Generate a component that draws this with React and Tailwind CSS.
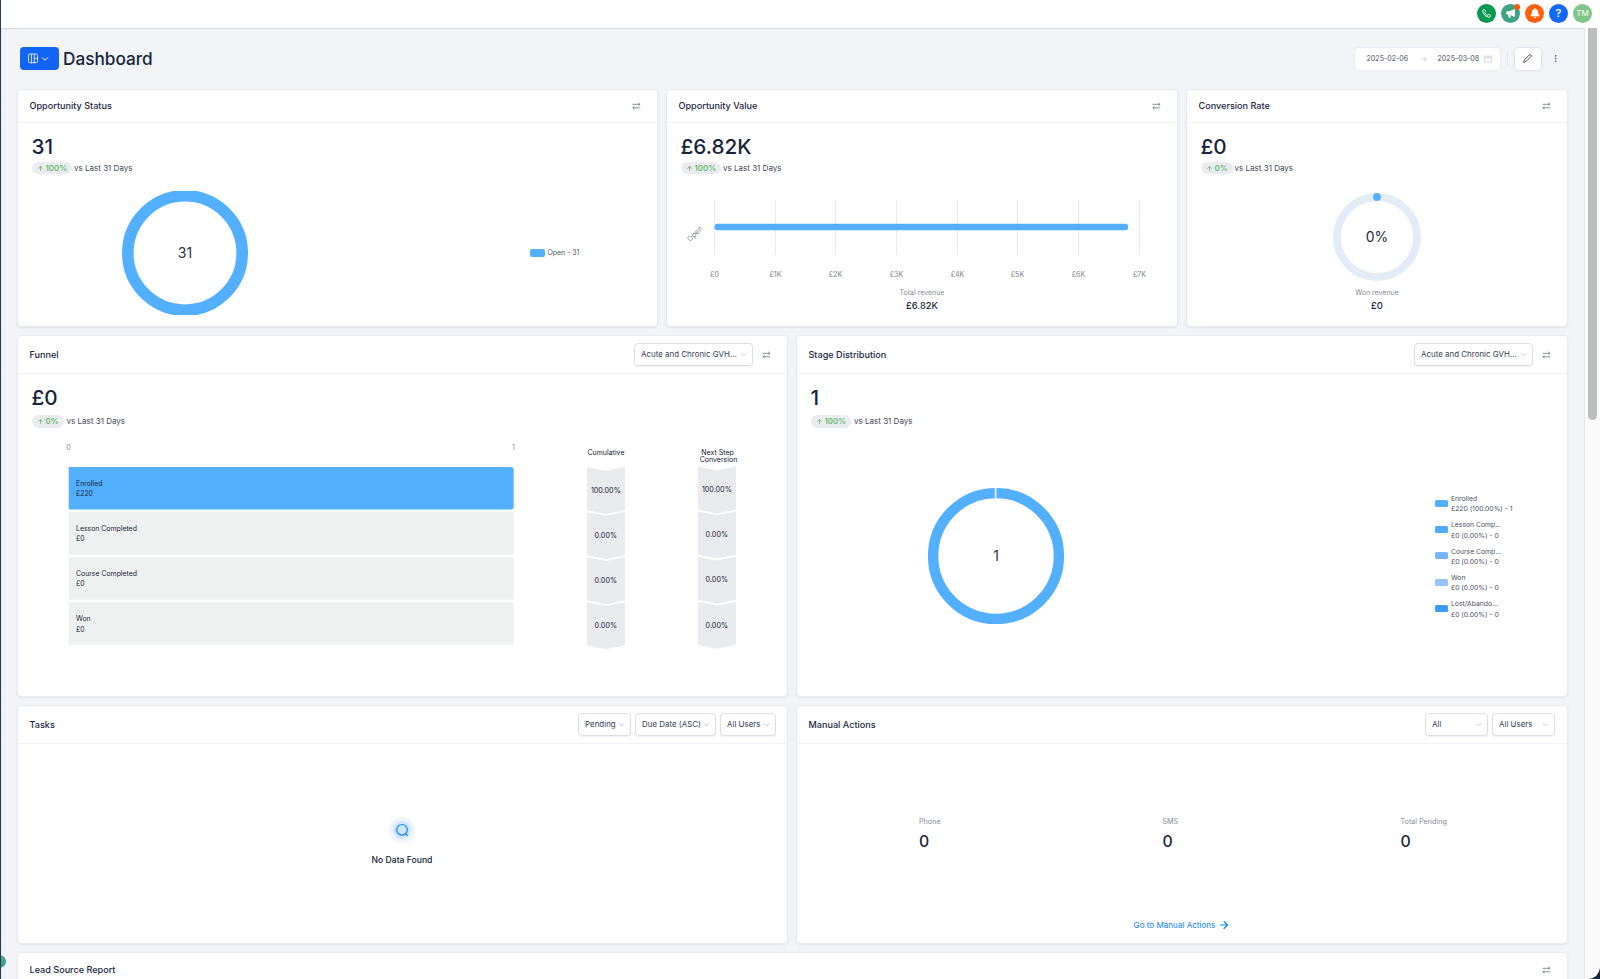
import React from "react";
import { ArrowRight, ArrowUp, ChevronDown, MoreVertical, Phone } from "lucide-react";
import { FaBell } from "react-icons/fa";
import { HiSpeakerphone } from "react-icons/hi";

const BLUE = "#53afff";

function SwapIcon() {
  return (
    <svg width="9" height="8" viewBox="0 0 9 8" fill="none" stroke="#6f7682" strokeWidth="0.8" className="shrink-0">
      <path d="M0.6 2.3H7.8M6.2 0.8L8.1 2.3L6.4 3.5" />
      <path d="M8.2 5.8H1.2M2.5 4.5L0.8 5.8L2.6 7.3" />
    </svg>
  );
}

function Card({ title, controls, headerClass = "h-8", className = "", children }) {
  return (
    <section className={`flex flex-col rounded-[4px] bg-white shadow-[0_0_0_1px_#e9ebf1,0_1px_2px_1px_#dfe2e8] ${className}`}>
      <header className={`flex shrink-0 items-center justify-between border-b border-[#f1f2f5] pl-[11.5px] pr-[16px] ${headerClass}`}>
        <h2 className="text-[9.1px] font-medium leading-none text-[#1b263d]">{title}</h2>
        <div className="flex items-center">{controls}</div>
      </header>
      {children}
    </section>
  );
}

function Stat({ value, change, tall = false }) {
  return (
    <div className="pl-[13.5px]">
      <div className={`flex h-6 items-center text-[20.7px] font-medium leading-none text-[#18243c] ${tall ? "" : "relative top-px"}`}>{value}</div>
      <div className={tall ? "flex items-center pt-[4.5px]" : "flex items-center pt-[4px]"}>
        <span className={`flex items-center gap-[2px] rounded-full bg-[#eaecf0] px-[5px] text-[8px] font-medium leading-none text-[#55b35c] ${tall ? "h-[13px]" : "h-3"}`}>
          <ArrowUp size={7} strokeWidth={2.5} />
          {change}
        </span>
        <span className={`text-[8px] leading-none text-[#3f4858] ${tall ? "pl-[3px]" : "pb-[1px] pl-[2px]"}`}>vs Last 31 Days</span>
      </div>
    </div>
  );
}

function Select({ label, className }) {
  return (
    <button className={`flex h-[23px] items-center justify-between whitespace-nowrap rounded-[4px] border border-[#dcdfe5] bg-white pl-[6px] pr-[5px] text-[7.95px] leading-none text-[#384152] shadow-[0_1px_1px_#eef0f3] ${className}`}>
      {label}
      <svg width="7" height="7" viewBox="0 0 7 7" fill="none" stroke="#b9bec7" strokeWidth="0.8" className="shrink-0">
        <path d="M0.8 2.2L3.5 4.9L6.2 2.2" />
      </svg>
    </button>
  );
}

function Summary({ label, value }) {
  return (
    <div className="flex flex-col items-center">
      <span className="flex h-3 items-center text-[7px] leading-none text-[#848b96]">{label}</span>
      <span className="mt-px flex h-[14px] items-center text-[9.3px] font-medium leading-none text-[#1b263b]">{value}</span>
    </div>
  );
}

const TICKS = [
  [47, "£0"], [108, "£1K"], [168, "£2K"], [229, "£3K"],
  [290, "£4K"], [350, "£5K"], [411, "£6K"], [472, "£7K"],
];

function ValueChart() {
  return (
    <svg width="510" height="90" viewBox="0 0 510 90" className="block">
      {TICKS.map(([x, label]) => (
        <g key={label}>
          <path d={`M${x + 0.5} 9V64`} stroke="#e8eaee" />
          <text x={x + 0.5} y="85.5" textAnchor="middle" fontSize="7.1" fill="#81868f">{label}</text>
        </g>
      ))}
      <rect x="47.5" y="32.7" width="413.7" height="6.6" rx="3" fill={BLUE} />
      <text transform="translate(29.5 44.5) rotate(-45)" textAnchor="middle" fontSize="7.2" fill="#7b818b">Open</text>
    </svg>
  );
}

const STEPS = [
  ["Enrolled", "£220", "100.00%"],
  ["Lesson Completed", "£0", "0.00%"],
  ["Course Completed", "£0", "0.00%"],
  ["Won", "£0", "0.00%"],
];

function FunnelChart() {
  return (
    <svg width="769" height="220" viewBox="18 436 769 220" className="mt-[8.5px] block" fontSize="6.9" fill="#1b2436">
      <g fill="#858b95" textAnchor="middle" fontSize="7">
        <text x="68.5" y="450">0</text>
        <text x="513.5" y="450">1</text>
      </g>
      <g textAnchor="middle" fontSize="7" fill="#111a2d">
        <text x="606" y="455.2">Cumulative</text>
        <text x="717.5" y="455.2">Next Step</text>
        <text x="718.5" y="462">Conversion</text>
      </g>
      {STEPS.map(([name, amount, pct], i) => {
        const y = 467 + i * 45.1;
        return (
          <g key={name}>
            {i === 0 ? (
              <path d={`M68.7 ${y}H510.7Q513.7 ${y} 513.7 ${y + 3}V${y + 39.6}Q513.7 ${y + 42.6} 510.7 ${y + 42.6}H68.7Z`} fill={BLUE} />
            ) : (
              <rect x="68.7" y={y} width="445" height="42.6" fill="#eff1f1" />
            )}
            <text x="76" y={y + 18.9}>{name}</text>
            <text x="76" y={y + 29.2}>{amount}</text>
            {[[587, 0], [698, -0.5]].map(([x, dy]) => (
              <g key={x}>
                <path d={`M${x} ${y + dy}L${x + 19} ${y + dy + 3.7}L${x + 38} ${y + dy}V${y + dy + 43}L${x + 19} ${y + dy + 47}L${x} ${y + dy + 43}Z`} fill="#eaebef" />
                <text x={x + 18.8} y={y + dy + 25.7} textAnchor="middle" fontSize="7.2">{pct}</text>
              </g>
            ))}
          </g>
        );
      })}
    </svg>
  );
}

const STAGES = [
  ["Enrolled", "£220 (100.00%) - 1", "bg-[#53afff]"],
  ["Lesson Comp...", "£0 (0.00%) - 0", "bg-[#4dabfd]"],
  ["Course Comp...", "£0 (0.00%) - 0", "bg-[#77b6fb]"],
  ["Won", "£0 (0.00%) - 0", "bg-[#98c3fe]"],
  ["Lost/Abando...", "£0 (0.00%) - 0", "bg-[#3a9cf6]"],
];

function Metric({ label, className }) {
  return (
    <div className={className}>
      <div className="flex h-3 items-center text-[7.2px] leading-none text-[#858b96]">{label}</div>
      <div className="mt-[2px] flex h-6 items-center text-[15.8px] font-medium leading-none text-[#1b263b]">0</div>
    </div>
  );
}

function RoundButton({ className, children }) {
  return <button className={`flex size-[19px] items-center justify-center rounded-full text-white ${className}`}>{children}</button>;
}

function TopBar() {
  return (
    <div className="flex h-7 shrink-0 items-start justify-end gap-[5px] bg-white pr-[8px] pt-[3.5px] shadow-[0_1px_1px_#d9dce2]">
      <RoundButton className="bg-[#06994f]"><Phone size={9} strokeWidth={2.4} /></RoundButton>
      <RoundButton className="relative bg-[#3ea584]">
        <HiSpeakerphone size={11} />
        <span className="absolute right-0 top-0 size-[6px] rounded-full bg-[#ff5a0a]" />
      </RoundButton>
      <RoundButton className="bg-[#ff600b]"><FaBell size={10} /></RoundButton>
      <RoundButton className="bg-[#1269f7] text-[11px] font-medium leading-none">?</RoundButton>
      <RoundButton className="bg-[#7fc588] text-[8px] leading-none">TM</RoundButton>
    </div>
  );
}

function PageHeader() {
  return (
    <div className="mt-[19px] flex h-[23px] items-center justify-between pl-[17.5px] pr-[24.5px]">
      <div className="flex items-center gap-[4.5px]">
        <button className="flex h-[23px] w-[39px] items-center justify-center gap-[2px] rounded-[4px] bg-[#1164f4] text-white">
          <svg width="10" height="11" viewBox="0 0 10 11" fill="none" stroke="white" strokeWidth="0.8">
            <rect x="0.5" y="1" width="9" height="8.6" rx="1.2" />
            <path d="M3.4 1V10.4M6.2 1V10.4M6.2 5.3H9.5" />
          </svg>
          <ChevronDown size={10} strokeWidth={2.4} />
        </button>
        <h1 className="text-[17.2px] font-medium leading-none text-[#18243c]">Dashboard</h1>
      </div>
      <div className="flex items-center">
        <div className="flex h-[22px] w-[145px] items-center whitespace-nowrap rounded-[4px] bg-white pl-[12px] text-[7.1px] leading-none text-[#4a5261] shadow-[0_0_2px_#d5d9e2]">
          <span className="w-[53px]">2025-02-06</span>
          <ArrowRight size={8} strokeWidth={1.6} color="#b9bec8" className="shrink-0" />
          <span className="w-[50px] pl-[10px]">2025-03-08</span>
          <svg width="8" height="8" viewBox="0 0 8 8" fill="none" stroke="#c9cdd4" strokeWidth="0.8" className="ml-[6px] shrink-0">
            <path d="M0.7 1.2H7.3V7.2H0.7ZM0.7 2.8H7.3" />
          </svg>
        </div>
        <span className="ml-[7px] h-[14px] w-px bg-[#e6e8ee]" />
        <button className="ml-[7px] flex h-[22px] w-[26px] items-center justify-center rounded-[4px] bg-white shadow-[0_0_2px_1px_#dde0e8]">
          <svg width="9" height="9" viewBox="0 0 9 9" fill="none" stroke="#2d3648" strokeWidth="0.9" strokeLinejoin="round">
            <path d="M0.7 8.3L1.2 6.1L6.5 0.8Q7.2 0.3 7.9 1Q8.7 1.7 8.1 2.5L2.8 7.8Z" />
          </svg>
        </button>
        <MoreVertical size={9} strokeWidth={2.2} color="#596273" className="ml-[10px]" />
      </div>
    </div>
  );
}

export default function App() {
  return (
    <div className="relative flex h-[979px] w-[1600px] flex-col overflow-hidden border-l border-[#2f3a50] bg-[#f2f4f8] font-['Inter',sans-serif]">
      <TopBar />
      <div className="flex min-h-0 grow">
        <main className="min-w-0 grow overflow-hidden border-l border-[#e2e4ea]">
          <PageHeader />
          <div className="mt-5 flex flex-col gap-[10px] pl-4">
            <div className="flex h-[236px] gap-[10px]">
              <Card title="Opportunity Status" className="w-[639px]" headerClass="h-[33px]" controls={<SwapIcon />}>
                <div className="h-[11px]" />
                <Stat value="31" change="100%" />
                <div className="mt-[16.5px] flex h-[124px] items-center">
                  <svg width="126" height="124" viewBox="0 0 126 124" className="ml-[103.5px] block">
                    <circle cx="63" cy="62" r="57.2" fill="none" stroke={BLUE} strokeWidth="11.6" />
                    <text x="63" y="67.3" textAnchor="middle" fontSize="14" fill="#2c3546">31</text>
                  </svg>
                  <span className="ml-[282.5px] mt-[1px] h-2 w-[15px] rounded-[2px] bg-[#53afff]" />
                  <span className="ml-[2.5px] mt-[1px] text-[6.95px] leading-none text-[#4a5261]">Open - 31</span>
                </div>
              </Card>
              <Card title="Opportunity Value" className="w-[510px]" headerClass="h-[33px]" controls={<SwapIcon />}>
                <div className="h-[11px]" />
                <Stat value="£6.82K" change="100%" />
                <div className="mt-[17px]"><ValueChart /></div>
                <div className="flex justify-center pt-[5px]"><Summary label="Total revenue" value="£6.82K" /></div>
              </Card>
              <Card title="Conversion Rate" className="w-[380px]" headerClass="h-[33px]" controls={<SwapIcon />}>
                <div className="h-[11px]" />
                <Stat value="£0" change="0%" />
                <div className="mt-[19px] flex justify-center">
                  <svg width="88" height="88" viewBox="0 0 88 88" className="block">
                    <circle cx="44" cy="44" r="40" fill="none" stroke="#e4ecf7" strokeWidth="7.8" />
                    <circle cx="44" cy="4" r="3.9" fill={BLUE} />
                    <text x="44" y="49.2" textAnchor="middle" fontSize="14" fill="#1f293b">0%</text>
                  </svg>
                </div>
                <div className="flex justify-center pt-[5px]"><Summary label="Won revenue" value="£0" /></div>
              </Card>
            </div>

            <div className="flex h-[360px] gap-[10px]">
              <Card
                title="Funnel"
                className="w-[769px]"
                headerClass="h-[38px]"
                controls={<><Select label="Acute and Chronic GVH..." className="mr-[9px] w-[119px]" /><SwapIcon /></>}
              >
                <div className="h-[12px]" />
                <Stat value="£0" change="0%" tall />
                <FunnelChart />
              </Card>
              <Card
                title="Stage Distribution"
                className="w-[770px]"
                headerClass="h-[38px]"
                controls={<><Select label="Acute and Chronic GVH..." className="mr-[9px] w-[119px]" /><SwapIcon /></>}
              >
                <div className="h-[12px]" />
                <Stat value="1" change="100%" tall />
                <div className="mt-[60.5px] flex h-[136px] items-center">
                  <svg width="138" height="138" viewBox="0 0 138 138" className="ml-[130px] block">
                    <circle cx="69" cy="69" r="62.9" fill="none" stroke={BLUE} strokeWidth="10.4" />
                    <path d="M68.6 0V13" stroke="white" strokeWidth="1.6" />
                    <text x="69" y="74.3" textAnchor="middle" fontSize="14" fill="#2c3546">1</text>
                  </svg>
                  <ul className="ml-[369.5px] flex flex-col">
                    {STAGES.map(([name, detail, color]) => (
                      <li key={name} className="flex h-[26.3px] items-center">
                        <span className={`h-[7px] w-[13.5px] rounded-[1.5px] ${color}`} />
                        <div className="whitespace-nowrap pl-[3px] pt-[2px] text-[6.8px] leading-[10.2px] text-[#4a5261]">
                          <div>{name}</div>
                          <div>{detail}</div>
                        </div>
                      </li>
                    ))}
                  </ul>
                </div>
              </Card>
            </div>

            <div className="flex h-[237px] gap-[10px]">
              <Card
                title="Tasks"
                className="w-[769px]"
                headerClass="h-[38px] pr-[11px]!"
                controls={
                  <div className="flex gap-1">
                    <Select label="Pending" className="w-[53px]" />
                    <Select label="Due Date (ASC)" className="w-[81px]" />
                    <Select label="All Users" className="w-[56px]" />
                  </div>
                }
              >
                <div className="flex flex-col items-center pr-px pt-[73px]">
                  <div className="flex size-[26px] items-center justify-center rounded-full bg-[#eff3fa]">
                    <div className="flex size-[18px] items-center justify-center rounded-full bg-[#cfe5ff]">
                      <svg width="14" height="14" viewBox="0 0 14 14" fill="none" stroke="#1482f8" strokeWidth="1.2" strokeLinecap="round">
                        <circle cx="7" cy="6.8" r="5.3" />
                        <path d="M10.6 10.6L12.4 12.4" />
                      </svg>
                    </div>
                  </div>
                  <p className="mt-[9px] flex h-4 items-center text-[8.6px] font-medium leading-none text-[#111a2d]">No Data Found</p>
                </div>
              </Card>
              <Card
                title="Manual Actions"
                className="w-[770px]"
                headerClass="h-[38px] pr-[12px]!"
                controls={
                  <div className="flex gap-1">
                    <Select label="All" className="w-[63px]" />
                    <Select label="All Users" className="w-[63px]" />
                  </div>
                }
              >
                <div className="flex pl-[122px] pt-[72px]">
                  <Metric label="Phone" className="w-[243.5px]" />
                  <Metric label="SMS" className="w-[238px]" />
                  <Metric label="Total Pending" />
                </div>
                <a className="mt-[63px] flex h-4 items-center justify-center gap-[3px] text-[8.1px] leading-none text-[#0b82fb]">
                  Go to Manual Actions <ArrowRight size={12} strokeWidth={2.2} />
                </a>
              </Card>
            </div>

            <Card title="Lead Source Report" className="h-[60px] w-[1549px]" headerClass="h-[34px]" controls={<SwapIcon />} />
          </div>
        </main>
        <aside className="flex w-4 shrink-0 justify-center border-l border-[#e6e7ea] bg-[#fafafa]">
          <div className="h-[392px] w-[9px] rounded-b-full bg-[#bcbebd]" />
        </aside>
      </div>
      <span className="absolute -left-[8px] top-[955px] size-[13px] rounded-full bg-[#3ea584]" />
      <svg width="11" height="11" viewBox="0 0 11 11" className="absolute bottom-0 right-0">
        <path d="M11 0V11H0Q9.5 9.5 11 0Z" fill="#16233b" />
      </svg>
    </div>
  );
}
